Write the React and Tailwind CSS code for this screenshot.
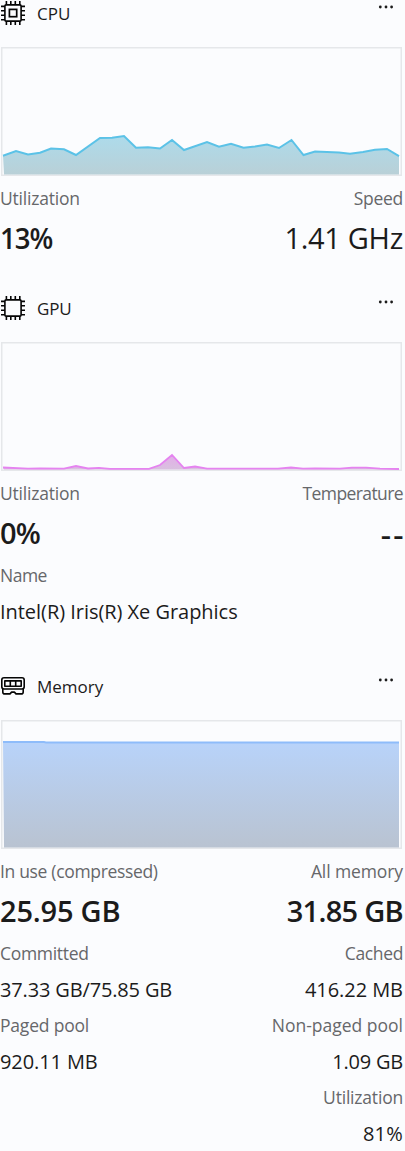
import React from "react";

const CPU_POINTS =
  "3,155.7 16,151 28,154.5 40,152.7 51,148.5 64,149.3 76,155 100,138 112,137.7 124,136 136,147.8 148,147.3 160,148.5 172,140 184,150 207,142 219,146.8 231,143.8 243.5,147.8 255,146.5 267,144.5 279,148 291.5,140 303.5,155 315,151.5 339,152.5 350,153.8 363,152 375,149.8 387,149 399,156.2";
const GPU_POINTS =
  "3,467.5 28,468.7 40,468.4 64,468.7 76,466 88,468.5 99,467.8 110,468.8 149,468.8 160,465 172,455 184,468 195,466.5 207,468.7 278,468.7 291,467.5 303,468.7 315,468.3 340,468.7 352,467.6 366,467.6 380,468.7 399,469";
const MEMORY_POINTS = "3,742.1 44,742.1 46,742.4 399,742.4";

function CpuIcon({ core }) {
  const pins = [6.4, 10.8, 15.3, 19.8];
  return (
    <svg className="block size-[26px]" viewBox="0 0 26 26" fill="none" stroke="#050505" strokeWidth="1.6">
      <rect x="4.9" y="4.9" width="16.2" height="16.2" rx="1.4" />
      {core && <rect x="9.4" y="9.4" width="7.3" height="7.3" strokeWidth="1.7" />}
      {pins.map((p) => (
        <path key={p} d={`M${p} 1v4M${p} 21v4M1 ${p}h4M21 ${p}h4`} />
      ))}
    </svg>
  );
}

function MemoryIcon() {
  return (
    <svg className="block size-[26px]" viewBox="0 0 26 26" fill="none" stroke="#050505" strokeWidth="1.6" strokeLinejoin="round">
      <rect x="1.8" y="4.8" width="22.4" height="11.2" rx="2.2" />
      <path d="M4.8 7.9h16.4v5.4h-16.4zM10.3 7.9v5.4M15.7 7.9v5.4" />
      <path d="M2.8 16v2.9q0 2 2 2h5.2l1.6-1.8h2.8l1.6 1.8h5.2q2 0 2-2v-2.9" />
    </svg>
  );
}

function Chart({ id, top, points, stroke, from, to, width }) {
  return (
    <div className="ml-px h-[129px] w-[401px]">
      <svg className="block" width="401" height="129" viewBox={`1 ${top} 401 129`}>
        <defs>
          <linearGradient id={id} x1="0" y1="0" x2="0" y2="1">
            <stop offset="0" stopColor={from} />
            <stop offset="1" stopColor={to} />
          </linearGradient>
        </defs>
        <rect x="1.75" y={top + 0.75} width="399.5" height="127.5" fill="none" stroke="#e5e7ea" strokeWidth="1.5" />
        <polygon points={`${points} 399,${top + 127.5} 4,${top + 127.5}`} fill={`url(#${id})`} />
        <polyline points={points} fill="none" stroke={stroke} strokeWidth={width} />
      </svg>
    </div>
  );
}

function Header({ icon, title, className }) {
  return (
    <div className="flex h-[47px] justify-between">
      <div className="flex h-[26px] items-center gap-[11px]">
        {icon}
        <span className={"mt-0.5 text-[17px] leading-[26px] text-[#1b1b1b] " + className}>{title}</span>
      </div>
      <svg className="mr-[9px] mt-[5px] block h-1 w-4" viewBox="0 0 16 4" fill="#1b1b1b">
        <circle cx="2.3" cy="2" r="1.4" />
        <circle cx="8" cy="2" r="1.4" />
        <circle cx="13.6" cy="2" r="1.4" />
      </svg>
    </div>
  );
}

function Labels({ children }) {
  return <div className="flex h-7 justify-between text-[17.5px] leading-[26px] text-[#66676a]">{children}</div>;
}

function Big({ children }) {
  return <div className="flex h-[54px] justify-between text-[29px] leading-[50px] text-[#1b1b1b]">{children}</div>;
}

function Values({ children }) {
  return <div className="flex h-11 justify-between text-[20px] leading-[44px] text-[#1b1b1b]">{children}</div>;
}

export default function App() {
  return (
    <main className="h-[1151px] w-[405px] overflow-hidden whitespace-nowrap bg-[#fbfcfe] pr-0.5 font-['Open_Sans','Noto_Sans',sans-serif]">
      <section className="h-[295px]">
        <Header icon={<CpuIcon core />} title="CPU" className="tracking-[0px]" />
        <Chart id="cpu" top={47} points={CPU_POINTS} stroke="#5bc2e7" from="#addbeb" to="#b9d0d7" width={2} />
        <div className="pt-[9px]">
          <Labels>
            <span className="tracking-[-0.2px]">Utilization</span>
            <span className="tracking-[-0.3px]">Speed</span>
          </Labels>
          <Big>
            <span className="origin-left scale-x-95 font-semibold tracking-[-1px]">13%</span>
            <span className="tracking-[-0.3px]">1.41 GHz</span>
          </Big>
        </div>
      </section>
      <section className="h-[378px]">
        <Header icon={<CpuIcon />} title="GPU" className="tracking-[-0.2px]" />
        <Chart id="gpu" top={342} points={GPU_POINTS} stroke="#e583f0" from="#e3ade9" to="#d9c0df" width={1.8} />
        <div className="pt-[9px]">
          <Labels>
            <span className="tracking-[-0.2px]">Utilization</span>
            <span className="tracking-[-0.6px]">Temperature</span>
          </Labels>
          <Big>
            <span className="font-semibold tracking-[-0.8px]">0%</span>
            <span className="-mr-[3px] origin-right scale-x-110 font-semibold leading-[52px] tracking-[2px]">--</span>
          </Big>
          <Labels>
            <span className="tracking-[-0.5px]">Name</span>
          </Labels>
          <Values>
            <span className="tracking-[-0.04px]">Intel(R) Iris(R) Xe Graphics</span>
          </Values>
        </div>
      </section>
      <section>
        <Header icon={<MemoryIcon />} title="Memory" className="tracking-[0px]" />
        <Chart id="memory" top={720} points={MEMORY_POINTS} stroke="#8ebcfa" from="#b8d3fa" to="#b9c3d1" width={2} />
        <div className="pt-[9px]">
          <Labels>
            <span className="tracking-[-0.33px]">In use (compressed)</span>
            <span className="tracking-[-0.1px]">All memory</span>
          </Labels>
          <Big>
            <span className="font-semibold tracking-[-0.2px]">25.95 GB</span>
            <span className="font-semibold tracking-[-0.7px]">31.85 GB</span>
          </Big>
          <Labels>
            <span className="tracking-[-0.3px]">Committed</span>
            <span className="tracking-[-0.35px]">Cached</span>
          </Labels>
          <Values>
            <span className="tracking-[-0.15px]">37.33 GB/75.85 GB</span>
            <span className="tracking-[-0.05px]">416.22 MB</span>
          </Values>
          <Labels>
            <span className="tracking-[-0.2px]">Paged pool</span>
            <span className="tracking-[0px]">Non-paged pool</span>
          </Labels>
          <Values>
            <span className="tracking-[-0.1px]">920.11 MB</span>
            <span className="tracking-[-0.2px]">1.09 GB</span>
          </Values>
          <Labels>
            <span />
            <span className="tracking-[-0.2px]">Utilization</span>
          </Labels>
          <Values>
            <span />
            <span className="tracking-[0.2px]">81%</span>
          </Values>
        </div>
      </section>
    </main>
  );
}
